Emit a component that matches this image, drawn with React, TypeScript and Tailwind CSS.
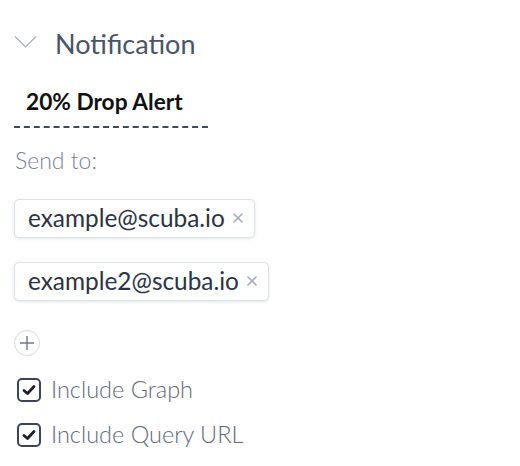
import { FC } from "react";

const emails = ["example@scuba.io", "example2@scuba.io"];

const Chip: FC<{ label: string }> = ({ label }) => (
  <div className="inline-flex items-center h-[39px] pl-[13px] pr-[9px] bg-white border border-[#dde1e8] rounded-[5px] shadow-[0_1px_3px_rgba(40,50,70,0.12)]">
    <span className="text-[24.4px] text-[#2b3444] leading-none">{label}</span>
    <svg width="14" height="14" viewBox="0 0 14 14" className="ml-[6px]">
      <path d="M3 3 L11 11 M11 3 L3 11" stroke="#a3aab7" strokeWidth="1.6" strokeLinecap="round" />
    </svg>
  </div>
);

const Check: FC<{ label: string }> = ({ label }) => (
  <label className="flex items-center h-[26px]">
    <span className="ml-[3px] w-[24px] h-[24px] rounded-[5px] border-2 border-[#3b4557] flex items-center justify-center">
      <svg width="14" height="12" viewBox="0 0 14 12">
        <path d="M2 6.5 L5.5 9.5 L12 2.5" fill="none" stroke="#1a202c" strokeWidth="2.8" strokeLinecap="round" strokeLinejoin="round" />
      </svg>
    </span>
    <span className="ml-[10px] text-[23.5px] font-light text-[#5f697c] leading-none">{label}</span>
  </label>
);

const App: FC = () => {
  return (
    <div className="w-[520px] h-[466px] bg-white px-[14px] pt-[26px] font-['Lato','Noto_Sans',sans-serif]">
      {/* Header */}
      <div className="flex items-center h-[34px]">
        <svg width="23" height="14" viewBox="0 0 23 14" className="mt-[-2px]">
          <path d="M1 1.5 L11.5 12 L22 1.5" fill="none" stroke="#a7aebb" strokeWidth="1.2" />
        </svg>
        <span className="ml-[18px] text-[27px] text-[#4a5468] leading-none">Notification</span>
      </div>

      {/* Alert name */}
      <div className="mt-[31px] w-[194px] pl-[12px] pb-[12px] border-b-2 border-dashed border-[#3f4a5c]">
        <span className="block text-[22.7px] font-bold text-[#111] leading-none">20% Drop Alert</span>
      </div>

      <div className="mt-[21px] pl-[1px] text-[23px] font-light text-[#7a8396] leading-none">Send to:</div>

      <div className="mt-[27px] flex flex-col items-start gap-[24px]">
        {emails.map((e) => (
          <Chip key={e} label={e} />
        ))}
      </div>

      <button className="mt-[29px] w-[26px] h-[26px] rounded-full border border-[#d6dae2] flex items-center justify-center">
        <svg width="16" height="16" viewBox="0 0 16 16">
          <path d="M8 1 V15 M1 8 H15" stroke="#6f798c" strokeWidth="1.4" />
        </svg>
      </button>

      <div className="mt-[21px] flex flex-col gap-[19px]">
        <Check label="Include Graph" />
        <Check label="Include Query URL" />
      </div>
    </div>
  );
};

export default App;
